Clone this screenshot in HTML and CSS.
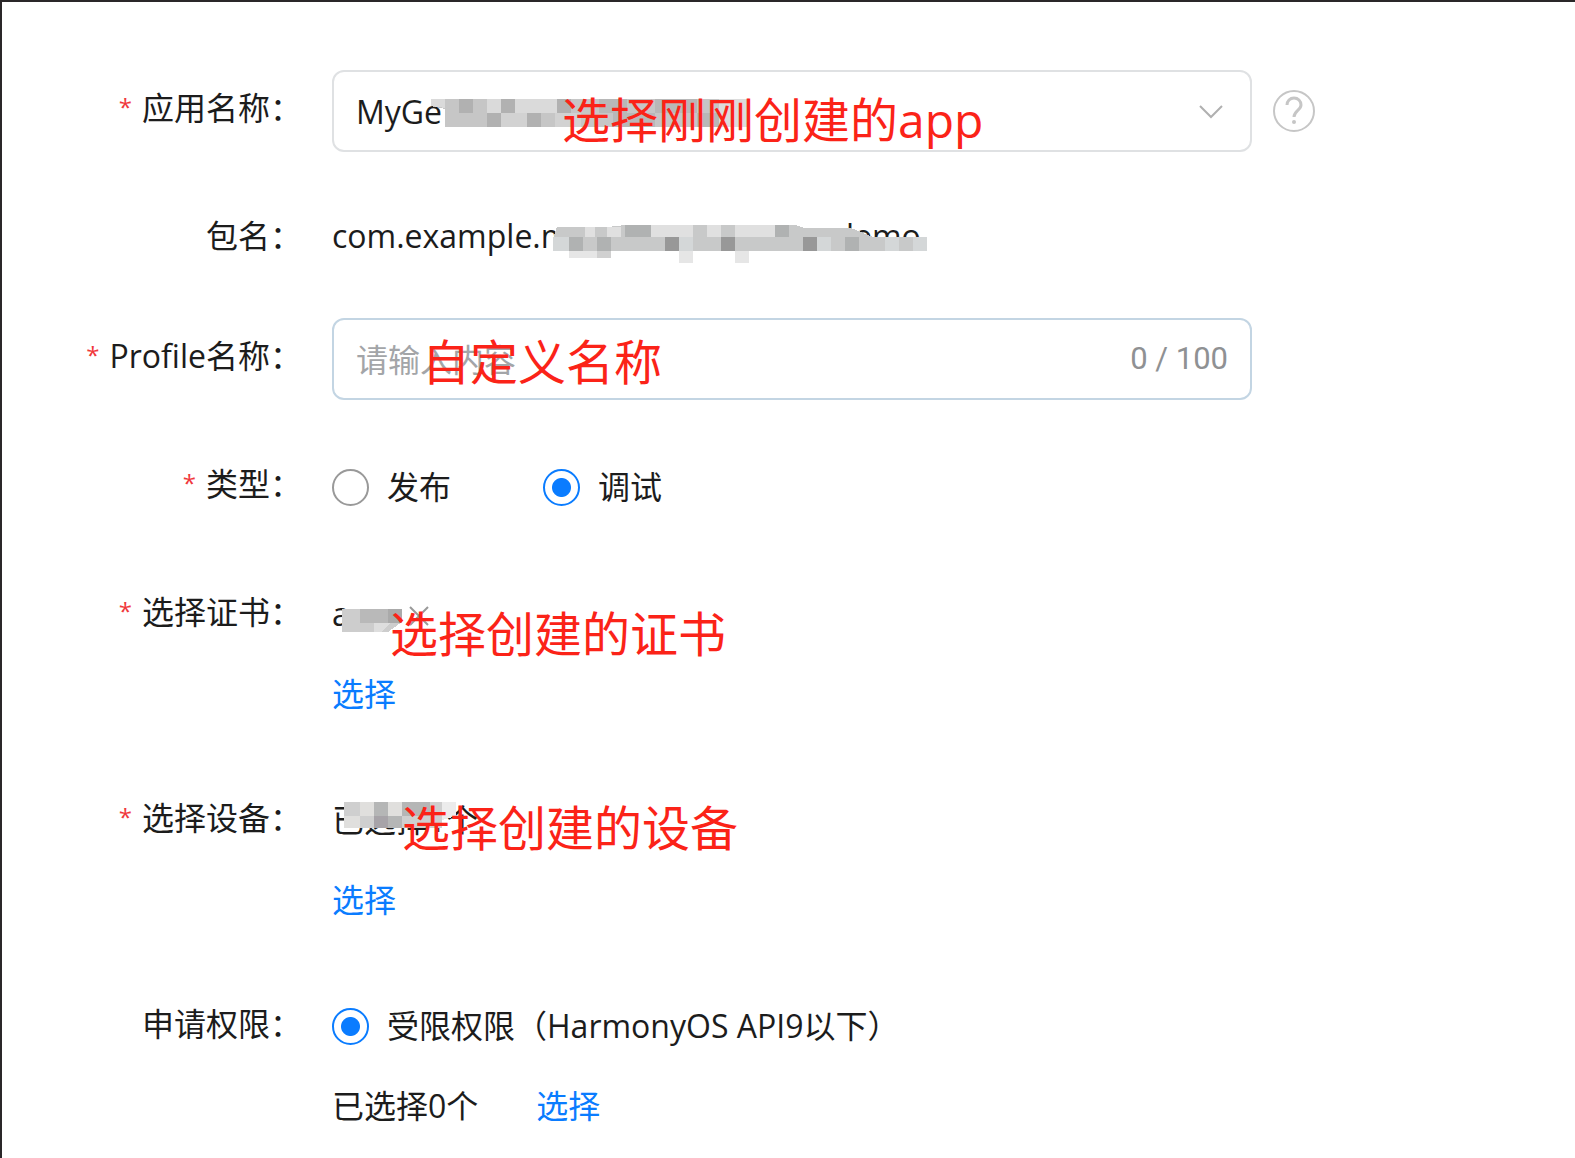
FILE: index.html
```html
<!DOCTYPE html>
<html lang="zh-CN">
<head>
    <meta charset="UTF-8">
    <meta name="viewport" content="width=device-width, initial-scale=1.0">
    <title>Profile</title>
    <link rel="stylesheet" href="styles.css">
</head>
<body>
    <form class="form">
        <div class="row">
            <label class="label required" for="app">应用名称：</label>
            <div class="content field">
                <div class="box">
                    <select id="app" class="control">
                        <option>MyGe</option>
                    </select>
                    <svg class="arrow" width="26" height="16" viewBox="0 0 26 16"><path d="M2 2l11 11L24 2" fill="none" stroke="#b0b0b0" stroke-width="2"/></svg>
                    <svg class="mosaic mosaic-app" width="316" height="28" viewBox="0 0 316 28" shape-rendering="crispEdges">
                        <path d="M0 0h316v28H14V10L0 7z" fill="#c6c6c6"/>
                        <path d="M0 0h14v9L0 7zM56 0h14v14H56zM84 0h42v14H84z" fill="#dadada"/>
                        <path d="M28 0h14v14H28zM70 0h14v14H70zM126 0h14v14h-14zM56 14h14v14H56zM96 14h14v14H96z" fill="#b1b1b1"/>
                        <path d="M70 14h26v14H70zM124 14h26v14h-26z" fill="#d2d2d2"/>
                        <path d="M168 0h28v14h-28zM224 0h42v14h-42zM182 14h42v14h-42zM266 14h22v14h-22z" fill="#b8b8b8"/>
                        <path d="M288 0h28v28h-28z" fill="#dcdcdc"/>
                    </svg>
                    <span class="note note-app">选择刚刚创建的app</span>
                </div>
                <button type="button" class="help" aria-label="帮助">
                    <svg width="42" height="42" viewBox="0 0 42 42" fill="none" stroke="#c6c6c6" stroke-width="2"><circle cx="21" cy="21" r="20"/><path d="M14 15c0-4 3-7 7-7s7 3 7 7c0 5-7 6-7 12" stroke-width="3"/><circle cx="21" cy="32" r="2" fill="#c6c6c6" stroke="none"/></svg>
                </button>
            </div>
        </div>

        <div class="row row-text">
            <span class="label">包名：</span>
            <div class="content">
                <span>com.example.m</span><span class="hidden-part"></span><span>demo</span>
                <svg class="mosaic mosaic-package" width="374" height="38" viewBox="0 0 374 38" shape-rendering="crispEdges">
                    <path d="M4 2h50l18-2h170l10 3h46l22 9h54v14H0V14z" fill="#c8c9c9"/>
                    <path d="M32 2h10v10H32zM54 2h14v10H54zM98 0h28v12H98zM126 0h14v12h-14zM154 0h14v12h-14zM182 0h28v12h-28zM210 0h14v12h-14z" fill="#e0e0e0"/>
                    <path d="M72 0h26v12H72zM222 0h14v12h-14zM16 12h14v14H16zM44 12h14v14H44zM292 12h14v14h-14z" fill="#b0b2b2"/>
                    <path d="M112 12h14v14h-14zM168 12h14v14h-14zM250 12h14v14h-14z" fill="#989898"/>
                    <path d="M0 12h16v14H0zM126 12h14v14h-14zM264 12h14v14h-14zM332 12h14v14h-14zM360 12h14v14h-14z" fill="#d4d7d8"/>
                    <path d="M44 26h14v7H44z" fill="#d0d0d0"/>
                    <path d="M16 26h28v7H16zM126 26h14v12h-14zM182 26h14v12h-14z" fill="#e6e6e6"/>
                </svg>
            </div>
        </div>

        <div class="row">
            <label class="label required" for="profile">Profile名称：</label>
            <div class="content field">
                <div class="box">
                    <input id="profile" class="control control-active" type="text" maxlength="100" placeholder="请输入内容">
                    <span class="count">0 / 100</span>
                    <span class="note note-profile">自定义名称</span>
                </div>
            </div>
        </div>

        <div class="row row-type">
            <span class="label required">类型：</span>
            <div class="content radios">
                <label class="radio"><input type="radio" name="type">发布</label>
                <label class="radio"><input type="radio" name="type" checked>调试</label>
            </div>
        </div>

        <div class="row">
            <span class="label required">选择证书：</span>
            <div class="content">
                <div class="line">a
                    <svg class="mosaic mosaic-cert" width="70" height="24" viewBox="0 0 70 24" shape-rendering="crispEdges">
                        <path d="M0 0h60v13l-14 10H0z" fill="#cdcdcd"/>
                        <path d="M18 0h28v14H18z" fill="#b9b9b9"/>
                        <path d="M46 0h14v14H46z" fill="#aaa"/>
                        <path d="M32 14h16l-8 9h-8z" fill="#dedede"/>
                    </svg>
                    <svg class="remove" width="20" height="20" viewBox="0 0 20 20"><path d="M1 1l18 18M19 1L1 19" stroke="#999" stroke-width="2"/></svg>
                </div>
                <div class="line"><a href="#">选择</a></div>
                <span class="note note-cert">选择创建的证书</span>
            </div>
        </div>

        <div class="row">
            <span class="label required">选择设备：</span>
            <div class="content">
                <div class="line">已选择1个
                    <svg class="mosaic mosaic-device" width="112" height="26" viewBox="0 0 112 26" shape-rendering="crispEdges">
                        <path d="M0 0h98v26H0z" fill="#cfcfcf"/>
                        <path d="M16 0h14v14H16zM0 14h16v12H0zM44 0h14v14H44z" fill="#e0dfdd"/>
                        <path d="M30 0h14v14H30zM58 0h28v14H58zM44 14h14v12H44z" fill="#b5b6b6"/>
                        <path d="M30 14h14v12H30z" fill="#a7a3a8"/>
                        <path d="M98 0h14v14l-14 4z" fill="#ececec"/>
                    </svg>
                </div>
                <div class="line"><a href="#">选择</a></div>
                <span class="note note-device">选择创建的设备</span>
            </div>
        </div>

        <div class="row">
            <span class="label">申请权限：</span>
            <div class="content">
                <label class="radio"><input type="radio" name="permission" checked>受限权限（HarmonyOS API9以下）</label>
                <div class="line selected"><span>已选择0个</span><a href="#">选择</a></div>
            </div>
        </div>
    </form>
</body>
</html>
```

FILE: styles.css
```css
* {
    box-sizing: border-box;
}

body {
    margin: 0;
    min-height: 100vh;
    border-top: 2px solid #2a2729;
    border-left: 2px solid #2a2729;
    background-color: #fff;
    color: #1c1c1c;
    font-family: "Open Sans", "Noto Sans CJK SC", sans-serif;
    font-size: 32px;
    overflow: hidden;
}

.form {
    display: flex;
    flex-direction: column;
    gap: 46px;
    padding-top: 68px;
}

.row {
    display: grid;
    grid-template-columns: 300px 1fr;
    column-gap: 30px;
}

.label {
    line-height: 76px;
    text-align: right;
    white-space: nowrap;
}

.required::before {
    content: "*";
    margin-right: 10px;
    color: #f0383c;
    font-size: 24px;
    vertical-align: 4px;
    line-height: 1;
}

.content {
    position: relative;
    line-height: 80px;
    white-space: nowrap;
}

.row-text {
    height: 74px;
}

.row-text .content {
    line-height: 76px;
}

.row-type {
    min-height: 82px;
}

.field {
    display: flex;
    align-items: center;
    gap: 21px;
    padding-right: 24px;
}

.box {
    position: relative;
    flex: 0 1 920px;
    height: 82px;
}

.control {
    display: block;
    width: 100%;
    height: 82px;
    padding: 0 22px;
    border: 2px solid #dfe1e3;
    border-radius: 12px;
    outline: none;
    background-color: #fff;
    color: #1c1c1c;
    font: inherit;
    appearance: none;
}

.control-active {
    border-color: #c3d5e3;
}

.control::placeholder {
    color: #a3a5a8;
    opacity: 1;
}

.arrow {
    position: absolute;
    top: 34px;
    right: 28px;
}

.count {
    position: absolute;
    top: 0;
    right: 24px;
    line-height: 82px;
    color: #8f9193;
    font-family: Roboto, sans-serif;
    font-size: 31px;
}

.help {
    display: flex;
    padding: 0;
    border: none;
    background: none;
}

.radios {
    display: flex;
    gap: 92px;
}

.radio {
    display: flex;
    align-items: center;
    gap: 18px;
}

.radio input {
    width: 37px;
    height: 37px;
    margin: 0;
    border: 2px solid #999;
    border-radius: 50%;
    background-color: #fff;
    appearance: none;
}

.radio input:checked {
    border-color: #0a7cff;
    background-image: radial-gradient(circle, #0a7cff 9px, transparent 10px);
}

.line {
    height: 80px;
}

.selected {
    display: flex;
    gap: 58px;
}

a {
    color: #0a7cff;
    text-decoration: none;
}

/* red hints written over the fields */
.note {
    position: absolute;
    z-index: 2;
    color: #fb2318;
    font-size: 48px;
    line-height: 60px;
    pointer-events: none;
}

.note-app {
    top: 20px;
    left: 230px;
}

.note-profile {
    top: 14px;
    left: 90px;
}

.note-cert {
    top: 30px;
    left: 58px;
}

.note-device {
    top: 18px;
    left: 70px;
}

.mosaic {
    position: absolute;
    z-index: 1;
}

.mosaic-app {
    top: 29px;
    left: 99px;
}

.mosaic-package {
    top: 27px;
    left: 221px;
}

.mosaic-cert {
    top: 35px;
    left: 10px;
}

.mosaic-device {
    top: 22px;
    left: 12px;
}

.remove {
    position: absolute;
    top: 32px;
    left: 77px;
}

.hidden-part {
    display: inline-block;
    width: 264px;
}
```
